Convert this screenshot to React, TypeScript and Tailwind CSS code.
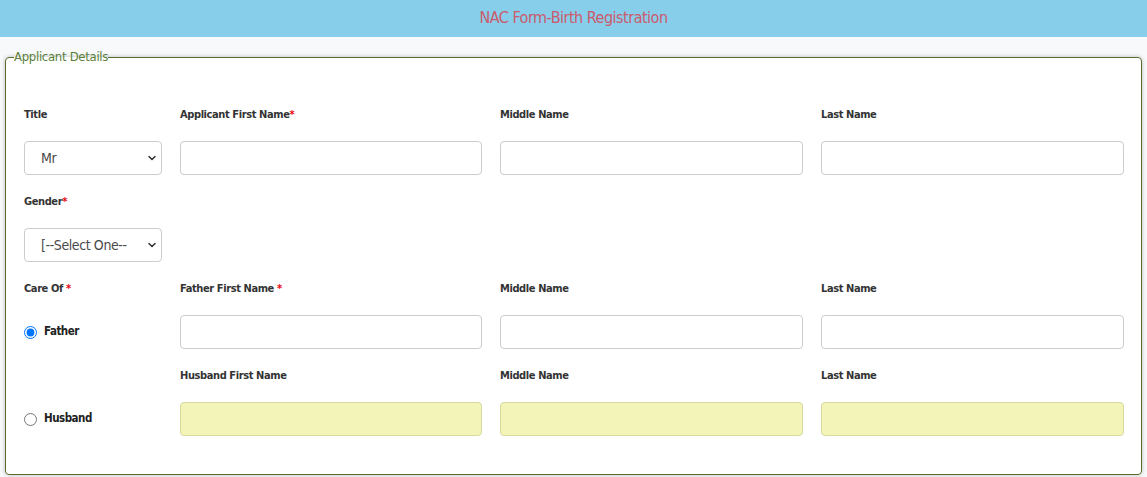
import React from "react";
import { ChevronDown } from "lucide-react";

const font = { fontFamily: '"DejaVu Sans Condensed", "Liberation Sans", sans-serif' };

function Label({ text, required, spaced }: { text?: string; required?: boolean; spaced?: boolean }) {
  return (
    <div className="h-[18px] mb-[18px] text-[11px] font-bold tracking-[-0.4px] leading-[20px] text-[#333]">
      {text}
      {required && <span className="text-red-600">{spaced ? " *" : "*"}</span>}
    </div>
  );
}

function TextBox({ yellow }: { yellow?: boolean }) {
  return (
    <input
      type="text"
      className={
        "block w-full h-[34px] rounded-[4px] border border-[#cccccc] px-3 text-[14px] outline-none " +
        (yellow ? "bg-[#f3f5b8] border-[#d6d9a0]" : "bg-white")
      }
    />
  );
}

function Select({ value }: { value: string }) {
  return (
    <div className="relative w-[138px] h-[34px]">
      <select
        defaultValue={value}
        className="appearance-none block w-full h-full rounded-[4px] border border-[#cccccc] bg-white pl-4 pr-7 text-[14px] tracking-[-0.4px] text-[#4a4a4a] outline-none"
        style={font}
      >
        <option>{value}</option>
      </select>
      <ChevronDown className="absolute right-[4px] top-[11px] w-[12px] h-[12px] text-[#333] pointer-events-none" strokeWidth={3} />
    </div>
  );
}

function Radio({ label, checked }: { label: string; checked?: boolean }) {
  return (
    <label className="flex items-center h-[34px] gap-[7px] text-[11.5px] font-bold tracking-[-0.5px] text-[#222]">
      <input type="radio" name="careof" defaultChecked={checked} className="m-0 w-[13px] h-[13px]" />
      {label}
    </label>
  );
}

export default function App() {
  return (
    <div className="w-[1147px] h-[477px] bg-[#f7f9fa] overflow-hidden" style={font}>
      <div className="h-[37px] bg-[#87ceeb] flex items-center justify-center">
        <h1 className="text-[16px] tracking-[-0.5px] text-[#cc5a6c] leading-none -mt-[1px]">NAC Form-Birth Registration</h1>
      </div>
      <fieldset className="mx-[5px] mt-[10px] border border-[#556b2f] rounded-[4px] bg-white shadow-[0_0_4px_rgba(0,0,0,0.25)] pl-[18px] pr-[17px] pt-[38px] pb-[38px]">
        <legend className="ml-[-10px] text-[13px] tracking-[-0.3px] leading-[20px] text-[#5b7f3b]">Applicant Details</legend>
        <div className="grid grid-cols-[138px_302px_303px_303px] gap-x-[18px] gap-y-[17px]">
          <div>
            <Label text="Title" />
            <Select value="Mr" />
          </div>
          <div>
            <Label text="Applicant First Name" required />
            <TextBox />
          </div>
          <div>
            <Label text="Middle Name" />
            <TextBox />
          </div>
          <div>
            <Label text="Last Name" />
            <TextBox />
          </div>

          <div className="col-span-4">
            <Label text="Gender" required />
            <Select value="[--Select One--" />
          </div>

          <div>
            <Label text="Care Of" required spaced />
            <Radio label="Father" checked />
          </div>
          <div>
            <Label text="Father First Name" required spaced />
            <TextBox />
          </div>
          <div>
            <Label text="Middle Name" />
            <TextBox />
          </div>
          <div>
            <Label text="Last Name" />
            <TextBox />
          </div>

          <div>
            <Label />
            <Radio label="Husband" />
          </div>
          <div>
            <Label text="Husband First Name" />
            <TextBox yellow />
          </div>
          <div>
            <Label text="Middle Name" />
            <TextBox yellow />
          </div>
          <div>
            <Label text="Last Name" />
            <TextBox yellow />
          </div>
        </div>
      </fieldset>
    </div>
  );
}
